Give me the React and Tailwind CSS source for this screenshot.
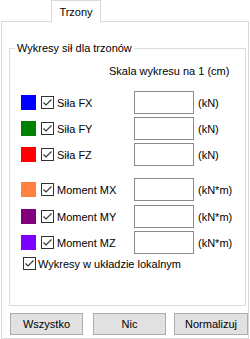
import React from 'react'

const forces = [
  { color: 'bg-[#0000ff]', label: 'Siła FX', unit: '(kN)', gap: 'mt-0' },
  { color: 'bg-[#008000]', label: 'Siła FY', unit: '(kN)', gap: 'mt-[3px]' },
  { color: 'bg-[#ff0000]', label: 'Siła FZ', unit: '(kN)', gap: 'mt-[3px]' },
  { color: 'bg-[#ff8040]', label: 'Moment MX', unit: '(kN*m)', gap: 'mt-[12px]' },
  { color: 'bg-[#800080]', label: 'Moment MY', unit: '(kN*m)', gap: 'mt-[4px]' },
  { color: 'bg-[#8000ff]', label: 'Moment MZ', unit: '(kN*m)', gap: 'mt-[3px]' },
]

function Check() {
  return (
    <span className="w-[13px] h-[13px] shrink-0 border border-[#333333] bg-white flex">
      <svg width="11" height="11" viewBox="0 0 11 11">
        <path d="M1.5 5.5 L4 8 L9.5 2.5" fill="none" stroke="#333333" strokeWidth="1.1" />
      </svg>
    </span>
  )
}

export default function App() {
  return (
    <div className="w-[250px] h-[339px] bg-white text-[11px] leading-[14px] text-black font-['Liberation_Sans',Arial,sans-serif] flex flex-col">
      <div className="h-[21px] shrink-0 flex pl-[51px] relative z-10">
        <div className="w-[50px] h-[22px] border border-b-0 border-[#d9d9d9] bg-white flex justify-center pt-[4px]">
          Trzony
        </div>
      </div>

      <div className="flex-1 ml-[1px] w-[248px] border border-[#d9d9d9] flex flex-col">
        <div className="relative mt-[26px] ml-[7px] w-[237px] h-[258px] border border-[#dcdcdc]">
          <span className="absolute left-[5px] top-[-8px] px-[2px] bg-white">Wykresy sił dla trzonów</span>

          <div className="mt-[15px] pl-[99px]">Skala wykresu na 1 (cm)</div>

          <div className="mt-[13px] flex flex-col">
            {forces.map(f => (
              <div key={f.label} className={`${f.gap} h-[23px] flex items-center pl-[11px]`}>
                <div className="w-[113px] flex items-center">
                  <span className={`w-[15px] h-[15px] ${f.color}`} />
                  <span className="ml-[5px]"><Check /></span>
                  <span className="ml-[3px]">{f.label}</span>
                </div>
                <div className="w-[60px] h-[23px] border border-[#8c8c8c] bg-white" />
                <span className="ml-[4px]">{f.unit}</span>
              </div>
            ))}
          </div>

          <div className="mt-[3px] pl-[13px] flex items-center h-[13px]">
            <Check />
            <span className="ml-[2px]">Wykresy w układzie lokalnym</span>
          </div>
        </div>

        <div className="mt-[7px] flex pl-[8px]">
          <button className="w-[73px] h-[22px] bg-[#e1e1e1] border border-[#adadad]">Wszystko</button>
          <button className="ml-[10px] w-[73px] h-[22px] bg-[#e1e1e1] border border-[#adadad]">Nic</button>
          <button className="ml-[8px] w-[74px] h-[22px] bg-[#e1e1e1] border border-[#adadad]">Normalizuj</button>
        </div>
      </div>
    </div>
  )
}
